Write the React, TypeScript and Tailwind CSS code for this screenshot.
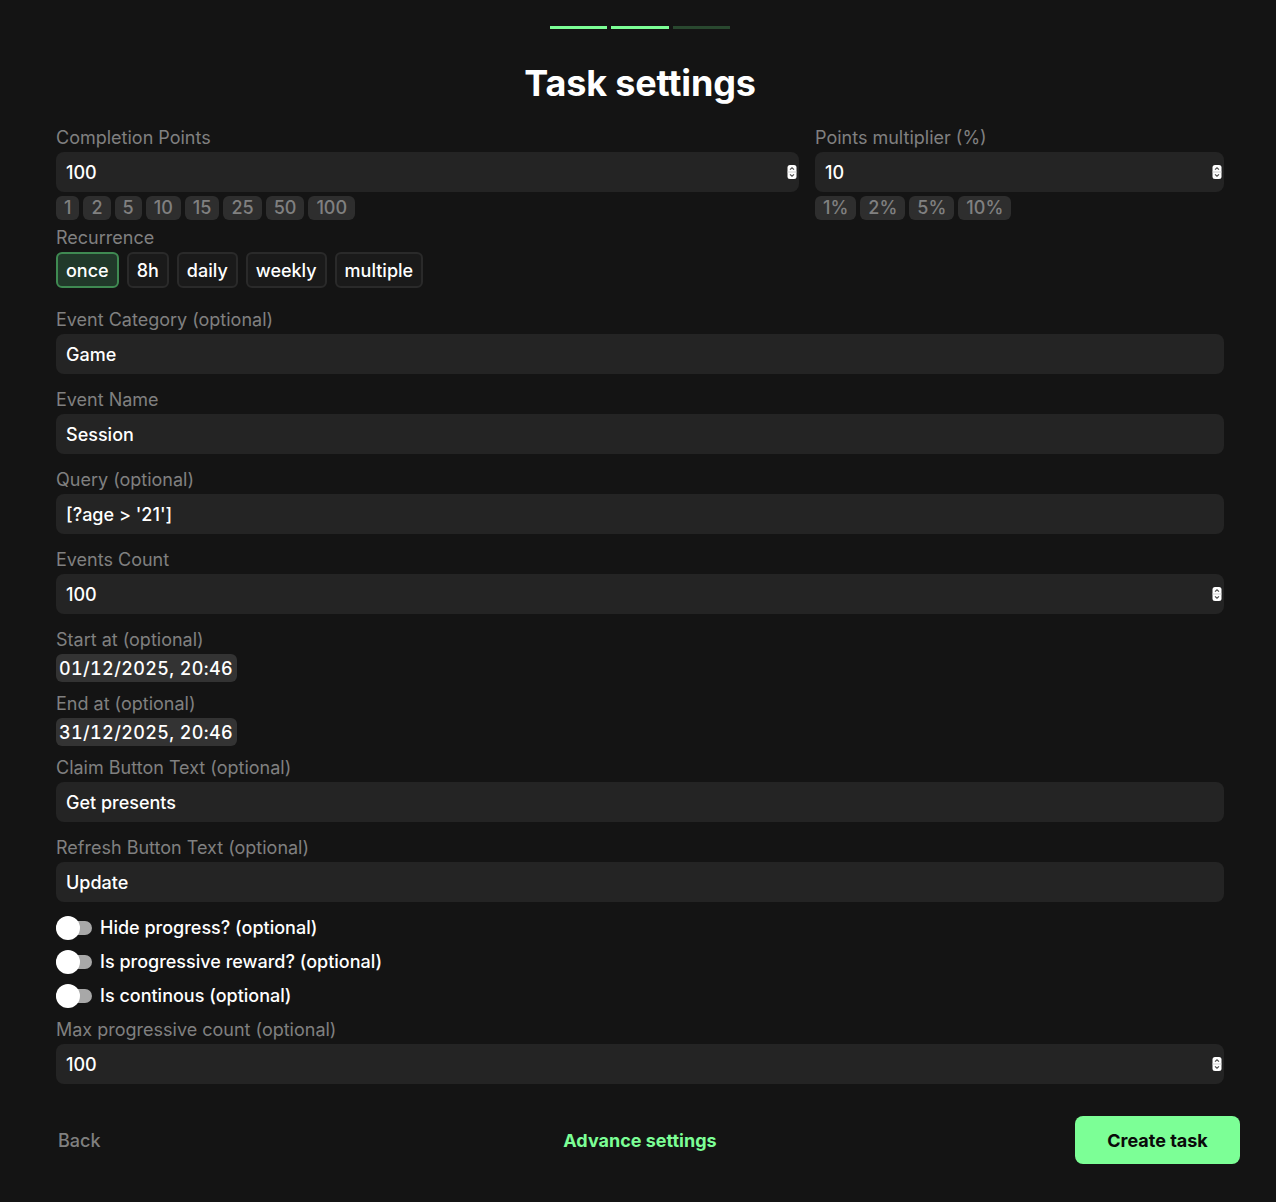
import { useState, type ReactNode } from "react";

const labelClass = "block h-5 text-[18px] leading-5 text-[#808080]";
const inputClass =
  "mt-1 block h-10 w-full rounded-lg bg-[#242424] px-2.5 text-[18px] font-medium text-white outline-none [appearance:textfield] [&::-webkit-inner-spin-button]:appearance-none";

const Label = ({ children }: { children: ReactNode }) => <label className={labelClass}>{children}</label>;

const Spinner = () => (
  <svg
    width="10"
    height="14"
    viewBox="0 0 10 14"
    className="pointer-events-none absolute right-0.5 top-[13px]"
    aria-hidden="true"
  >
    <rect x="0.5" width="9" height="14" rx="2.5" fill="#ffffff" />
    <rect x="0.5" y="6.5" width="9" height="1" fill="#d4d4d4" />
    <path d="M3 4.6 5 2.8 7 4.6" fill="none" stroke="#4a4a4a" strokeWidth="1.2" />
    <path d="M3 9.4 5 11.2 7 9.4" fill="none" stroke="#4a4a4a" strokeWidth="1.2" />
  </svg>
);

const Field = ({ label, value, type = "text" }: { label: string; value: string; type?: string }) => (
  <div>
    <Label>{label}</Label>
    <div className="relative">
      <input type={type} defaultValue={value} aria-label={label} className={inputClass} />
      {type === "number" && <Spinner />}
    </div>
  </div>
);

const Chips = ({ items }: { items: string[] }) => (
  <div className="mt-1 flex gap-1">
    {items.map((item) => (
      <button
        key={item}
        type="button"
        className="h-6 rounded-md bg-[#2e2e2e] px-2 text-[18px] leading-6 font-medium text-[#808080]"
      >
        {item}
      </button>
    ))}
  </div>
);

const DateField = ({ label, value }: { label: string; value: string }) => (
  <div>
    <Label>{label}</Label>
    <input
      type="text"
      defaultValue={value}
      aria-label={label}
      className="mt-1 block h-7 w-[181px] rounded-md bg-[#333333] px-[3px] text-[18px] font-medium tracking-[0.37px] tabular-nums text-white outline-none"
    />
  </div>
);

const Toggle = ({ label }: { label: string }) => (
  <div className="flex h-6 items-center gap-2">
    <span className="relative block h-6 w-9 shrink-0">
      <span className="absolute left-0 right-0 top-[5px] h-3.5 rounded-full bg-[#a8a8a8]" />
      <span className="absolute left-0 top-0 h-6 w-6 rounded-full bg-white" />
    </span>
    <span className="text-[18px] leading-6 font-medium text-white">{label}</span>
  </div>
);

const recurrence = ["once", "8h", "daily", "weekly", "multiple"];

export default function App() {
  const [active, setActive] = useState("once");

  return (
    <div className="min-h-[1202px] bg-[#141414] pt-[26px] font-['Inter',sans-serif]">
      <div className="flex justify-center gap-1 pl-1">
        <span className="h-[3px] w-[57px] bg-[#7cff96]" />
        <span className="h-[3px] w-[58px] bg-[#7cff96]" />
        <span className="h-[3px] w-[57px] bg-[#29482f]" />
      </div>

      <h1 className="mt-[31px] pl-1 text-center text-[36px] leading-[46px] font-bold tracking-[-0.15px] text-white">
        Task settings
      </h1>

      <div className="mt-[22px] pl-14 pr-[52px]">
        <div className="flex gap-4">
          <div className="w-[743px]">
            <Field label="Completion Points" value="100" type="number" />
            <Chips items={["1", "2", "5", "10", "15", "25", "50", "100"]} />
          </div>
          <div className="w-[409px]">
            <Field label="Points multiplier (%)" value="10" type="number" />
            <Chips items={["1%", "2%", "5%", "10%"]} />
          </div>
        </div>

        <div className="mt-2">
          <Label>Recurrence</Label>
          <div className="mt-1 flex gap-2">
            {recurrence.map((item) => (
              <button
                key={item}
                type="button"
                onClick={() => setActive(item)}
                className={
                  item === active
                    ? "h-9 rounded-md border-2 border-[#3f8a52] bg-[#21392a] px-2 text-[18px] font-medium text-white"
                    : "h-9 rounded-md border-2 border-[#2a2a2a] bg-[#1a1a1a] px-2 text-[18px] font-medium text-white"
                }
              >
                {item}
              </button>
            ))}
          </div>
        </div>

        <div className="mt-[22px] flex flex-col gap-4">
          <Field label="Event Category (optional)" value="Game" />
          <Field label="Event Name" value="Session" />
          <Field label="Query (optional)" value="[?age > '21']" />
          <Field label="Events Count" value="100" type="number" />
        </div>

        <div className="mt-4 flex flex-col gap-3">
          <DateField label="Start at (optional)" value="01/12/2025, 20:46" />
          <DateField label="End at (optional)" value="31/12/2025, 20:46" />
          <div className="flex flex-col gap-4">
            <Field label="Claim Button Text (optional)" value="Get presents" />
            <Field label="Refresh Button Text (optional)" value="Update" />
          </div>
        </div>

        <div className="mt-3.5 flex flex-col gap-2.5">
          <Toggle label="Hide progress? (optional)" />
          <Toggle label="Is progressive reward? (optional)" />
          <Toggle label="Is continous (optional)" />
        </div>

        <div className="mt-3">
          <Field label="Max progressive count (optional)" value="100" type="number" />
        </div>
      </div>

      <div className="mt-8 grid grid-cols-3 items-center pl-10 pr-9">
        <button type="button" className="ml-[18px] justify-self-start text-[18px] font-medium text-[#808080]">
          Back
        </button>
        <button type="button" className="justify-self-center text-[18px] font-bold text-[#7cff96]">
          Advance settings
        </button>
        <button
          type="button"
          className="h-12 w-[165px] justify-self-end rounded-lg bg-[#7cff96] text-[18px] font-bold text-[#0a0a0a]"
        >
          Create task
        </button>
      </div>
    </div>
  );
}
